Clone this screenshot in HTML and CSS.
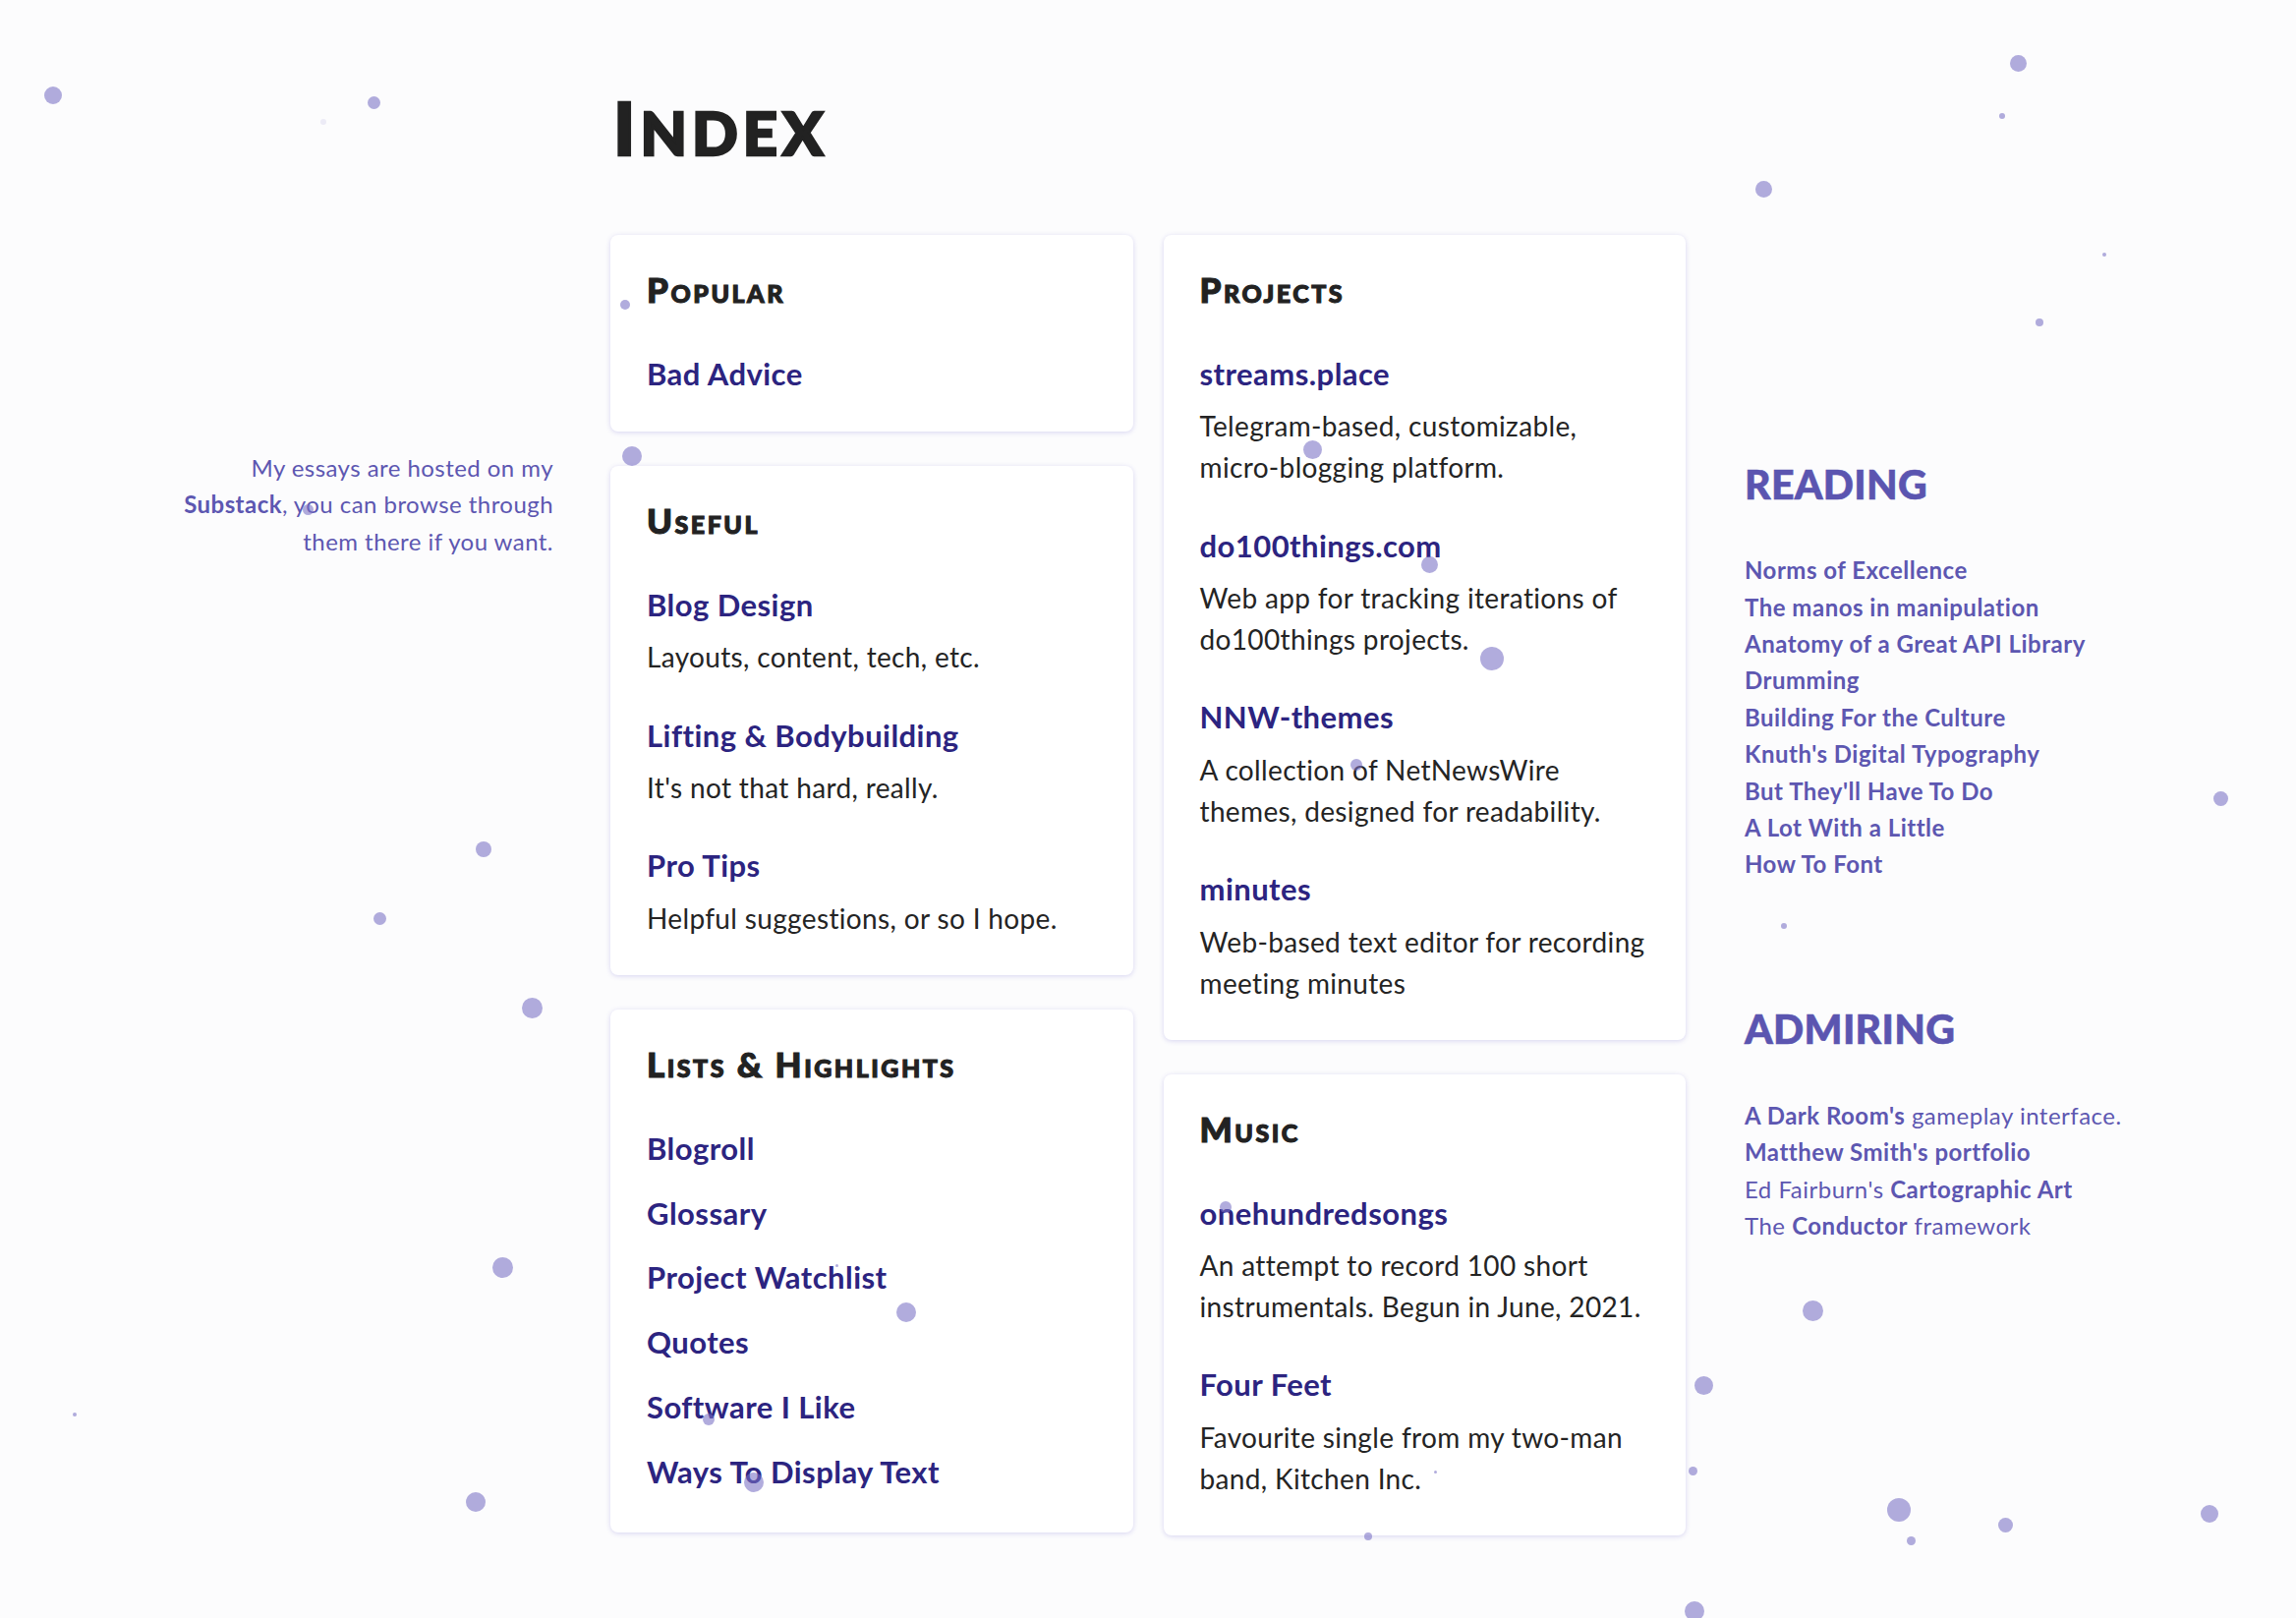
FILE: index.html
```html
<!DOCTYPE html>
<html lang="en">
<head>
<meta charset="utf-8">
<title>Index</title>
<link rel="stylesheet" href="styles.css">
</head>
<body>
<div class="page">
  <aside class="side side-left">
    <p class="note">My essays are hosted on my<br><a class="strong" href="#">Substack</a>, you can browse through<br>them there if you want.</p>
  </aside>

  <main class="main">
    <h1 class="title">I<span class="sc">ndex</span></h1>
    <div class="columns">
      <div class="col">
        <section class="card">
          <h2 class="card-title">Popular</h2>
          <ul class="items">
            <li class="item"><a class="item-link" href="#">Bad Advice</a></li>
          </ul>
        </section>
        <section class="card">
          <h2 class="card-title">Useful</h2>
          <ul class="items">
            <li class="item"><a class="item-link" href="#">Blog Design</a><p class="item-desc">Layouts, content, tech, etc.</p></li>
            <li class="item"><a class="item-link" href="#">Lifting &amp; Bodybuilding</a><p class="item-desc">It's not that hard, really.</p></li>
            <li class="item"><a class="item-link" href="#">Pro Tips</a><p class="item-desc">Helpful suggestions, or so I hope.</p></li>
          </ul>
        </section>
        <section class="card card-plain">
          <h2 class="card-title">Lists &amp; Highlights</h2>
          <ul class="items items-plain">
            <li class="item"><a class="item-link" href="#">Blogroll</a></li>
            <li class="item"><a class="item-link" href="#">Glossary</a></li>
            <li class="item"><a class="item-link" href="#">Project Watchlist</a></li>
            <li class="item"><a class="item-link" href="#">Quotes</a></li>
            <li class="item"><a class="item-link" href="#">Software I Like</a></li>
            <li class="item"><a class="item-link" href="#">Ways To Display Text</a></li>
          </ul>
        </section>
      </div>
      <div class="col">
        <section class="card">
          <h2 class="card-title">Projects</h2>
          <ul class="items">
            <li class="item"><a class="item-link" href="#">streams.place</a><p class="item-desc">Telegram-based, customizable,<br>micro-blogging platform.</p></li>
            <li class="item"><a class="item-link" href="#">do100things.com</a><p class="item-desc">Web app for tracking iterations of<br>do100things projects.</p></li>
            <li class="item"><a class="item-link" href="#">NNW-themes</a><p class="item-desc">A collection of NetNewsWire<br>themes, designed for readability.</p></li>
            <li class="item"><a class="item-link" href="#">minutes</a><p class="item-desc">Web-based text editor for recording<br>meeting minutes</p></li>
          </ul>
        </section>
        <section class="card">
          <h2 class="card-title">Music</h2>
          <ul class="items">
            <li class="item"><a class="item-link" href="#">onehundredsongs</a><p class="item-desc">An attempt to record 100 short<br>instrumentals. Begun in June, 2021.</p></li>
            <li class="item"><a class="item-link" href="#">Four Feet</a><p class="item-desc">Favourite single from my two-man<br>band, Kitchen Inc.</p></li>
          </ul>
        </section>
      </div>
    </div>
  </main>

  <aside class="side side-right">
    <h3 class="side-title">READING</h3>
    <ul class="side-list">
      <li><a class="strong" href="#">Norms of Excellence</a></li>
      <li><a class="strong" href="#">The manos in manipulation</a></li>
      <li><a class="strong" href="#">Anatomy of a Great API Library</a></li>
      <li><a class="strong" href="#">Drumming</a></li>
      <li><a class="strong" href="#">Building For the Culture</a></li>
      <li><a class="strong" href="#">Knuth's Digital Typography</a></li>
      <li><a class="strong" href="#">But They'll Have To Do</a></li>
      <li><a class="strong" href="#">A Lot With a Little</a></li>
      <li><a class="strong" href="#">How To Font</a></li>
    </ul>
    <h3 class="side-title side-title-2">ADMIRING</h3>
    <ul class="side-list">
      <li><a class="strong" href="#">A Dark Room's</a> gameplay interface.</li>
      <li><a class="strong" href="#">Matthew Smith's portfolio</a></li>
      <li>Ed Fairburn's <a class="strong" href="#">Cartographic Art</a></li>
      <li>The <a class="strong" href="#">Conductor</a> framework</li>
    </ul>
  </aside>
</div>

<div class="dots" aria-hidden="true">
  <span class="dot" style="left:54px;top:97px;--r:9px"></span>
  <span class="dot" style="left:380px;top:104px;--r:6.5px"></span>
  <span class="dot dot-faint" style="left:329px;top:124px;--r:3px"></span>
  <span class="dot" style="left:636px;top:310px;--r:5px"></span>
  <span class="dot" style="left:643px;top:464px;--r:10px"></span>
  <span class="dot" style="left:313px;top:518px;--r:5.5px"></span>
  <span class="dot" style="left:492px;top:864px;--r:8px"></span>
  <span class="dot" style="left:386px;top:934px;--r:6.5px"></span>
  <span class="dot" style="left:541px;top:1025px;--r:10.5px"></span>
  <span class="dot" style="left:511px;top:1289px;--r:10.5px"></span>
  <span class="dot" style="left:76px;top:1439px;--r:2px"></span>
  <span class="dot" style="left:484px;top:1528px;--r:10px"></span>
  <span class="dot" style="left:767px;top:1508px;--r:10px"></span>
  <span class="dot" style="left:721px;top:1444px;--r:6px"></span>
  <span class="dot" style="left:922px;top:1335px;--r:10px"></span>
  <span class="dot" style="left:851px;top:1287px;--r:1.5px"></span>
  <span class="dot" style="left:1335px;top:457px;--r:9.5px"></span>
  <span class="dot" style="left:1454px;top:574px;--r:8.5px"></span>
  <span class="dot" style="left:1518px;top:670px;--r:12px"></span>
  <span class="dot" style="left:1380px;top:778px;--r:6px"></span>
  <span class="dot" style="left:1247px;top:1228px;--r:6px"></span>
  <span class="dot" style="left:1460px;top:1497px;--r:1.5px"></span>
  <span class="dot" style="left:1392px;top:1563px;--r:4px"></span>
  <span class="dot" style="left:1733px;top:1409px;--r:9.5px"></span>
  <span class="dot" style="left:1722px;top:1496px;--r:4.5px"></span>
  <span class="dot" style="left:1724px;top:1639px;--r:10px"></span>
  <span class="dot" style="left:1844px;top:1333px;--r:10.5px"></span>
  <span class="dot" style="left:1932px;top:1536px;--r:12px"></span>
  <span class="dot" style="left:1944px;top:1567px;--r:4.5px"></span>
  <span class="dot" style="left:2040px;top:1551px;--r:7.5px"></span>
  <span class="dot" style="left:2248px;top:1540px;--r:9px"></span>
  <span class="dot" style="left:2259px;top:812px;--r:7.5px"></span>
  <span class="dot" style="left:1815px;top:942px;--r:3px"></span>
  <span class="dot" style="left:1794px;top:192px;--r:8.5px"></span>
  <span class="dot" style="left:2053px;top:64px;--r:8.5px"></span>
  <span class="dot" style="left:2037px;top:118px;--r:3px"></span>
  <span class="dot" style="left:2141px;top:259px;--r:2px"></span>
  <span class="dot" style="left:2075px;top:328px;--r:4px"></span>
</div>
</body>
</html>
```

FILE: styles.css
```css
* { box-sizing: border-box; }

html, body {
  margin: 0;
  padding: 0;
  background: #fcfcfd;
}

body {
  font-family: "Lato", "Noto Sans", sans-serif;
  color: #222222;
  min-height: 1646px;
  position: relative;
  overflow: hidden;
}

a { text-decoration: none; color: inherit; }

.page {
  display: grid;
  grid-template-columns: 1fr 1094px 1fr;
  column-gap: 60px;
}

/* ---------- left note ---------- */
.side-left {
  padding-top: 457px;
  text-align: right;
}

.note {
  margin: 0 -2px 0 0;
  font-size: 24px;
  line-height: 37.3px;
  color: #5d57b1;
  letter-spacing: 0.45px;
}

.strong { font-weight: 700; }

/* ---------- main ---------- */
.main {
  padding-top: 86px;
}

.title {
  margin: 0 0 60px 3px;
  font-size: 74px;
  line-height: 88.8px;
  font-weight: 900;
  color: #222222;
  letter-spacing: 5px;
  -webkit-text-stroke: 2.5px #222222;
}

.title .sc {
  font-size: 0.83em;
  text-transform: uppercase;
}

.columns {
  display: grid;
  grid-template-columns: 1fr 1fr;
  column-gap: 31px;
  align-items: start;
}

.col {
  display: flex;
  flex-direction: column;
  gap: 35px;
}

.card {
  background: #ffffff;
  border-radius: 8px;
  box-shadow: 0 1px 5px rgba(98, 88, 200, 0.24);
  padding: 34px 37px 37px;
}

.card-plain { padding-bottom: 40px; }

.card-title {
  margin: 0;
  font-size: 35px;
  line-height: 42px;
  font-weight: 900;
  font-variant: small-caps;
  letter-spacing: 2.5px;
  color: #222222;
  -webkit-text-stroke: 1.1px #222222;
}

.items {
  list-style: none;
  margin: 43px 0 0;
  padding: 0;
}

.item + .item { margin-top: 36.3px; }

.items-plain .item + .item { margin-top: 21.8px; }

.item-link {
  display: block;
  font-size: 31px;
  line-height: 44px;
  font-weight: 700;
  letter-spacing: 0.45px;
  color: #2c2480;
}

.item-desc {
  margin: 10.5px 0 0;
  font-size: 28px;
  line-height: 42px;
  color: #242424;
  letter-spacing: 0.35px;
}

/* ---------- right sidebar ---------- */
.side-right {
  padding-top: 468px;
  color: #5d57b1;
}

.side-title {
  margin: 0 0 44px 0;
  font-size: 41px;
  line-height: 49.2px;
  font-weight: 900;
  letter-spacing: 0.3px;
  color: #5b55b0;
  -webkit-text-stroke: 0.6px #5b55b0;
}

.side-title-2 { margin-top: 124px; margin-bottom: 45px; }

.side-list {
  list-style: none;
  margin: 0;
  padding: 0;
  font-size: 24px;
  line-height: 37.4px;
  letter-spacing: 0.5px;
}

/* ---------- decorative dots ---------- */
.dots {
  position: absolute;
  inset: 0;
  pointer-events: none;
}

.dot {
  position: absolute;
  width: calc(var(--r) * 2);
  height: calc(var(--r) * 2);
  margin-left: calc(var(--r) * -1);
  margin-top: calc(var(--r) * -1);
  border-radius: 50%;
  background: rgba(120, 112, 196, 0.58);
}

.dot-faint { background: rgba(120, 112, 196, 0.12); }
```
